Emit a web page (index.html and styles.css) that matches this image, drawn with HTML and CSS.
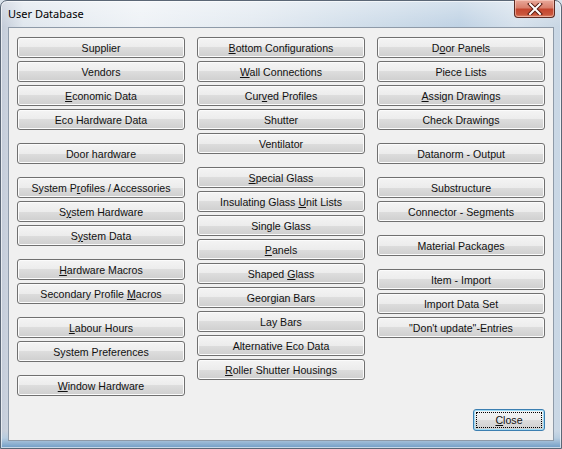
FILE: index.html
```html
<!DOCTYPE html>
<html>
<head>
<meta charset="utf-8">
<link rel="stylesheet" href="styles.css">
</head>
<body>
<div class="window">
  <div class="titlebar">
    <span class="title">User Database</span>
    <button class="closebox" aria-label="Close">
      <svg width="16" height="12" viewBox="0 0 16 12"><path d="M3 1 L13 11 M13 1 L3 11" stroke="#5a1e14" stroke-width="4" stroke-linecap="square"/><path d="M3 1 L13 11 M13 1 L3 11" stroke="#ffffff" stroke-width="2" stroke-linecap="square"/></svg>
    </button>
  </div>
  <div class="client">
    <div class="columns">
      <div class="col">
        <div class="btn">Supplier</div>
        <div class="btn">Vendors</div>
        <div class="btn"><u>E</u>conomic Data</div>
        <div class="btn">Eco Hardware Data</div>
        <div class="btn group">Door hardware</div>
        <div class="btn group">System P<u>r</u>ofiles / Accessories</div>
        <div class="btn">S<u>y</u>stem Hardware</div>
        <div class="btn">S<u>y</u>stem Data</div>
        <div class="btn group"><u>H</u>ardware Macros</div>
        <div class="btn">Secondary Profile <u>M</u>acros</div>
        <div class="btn group"><u>L</u>abour Hours</div>
        <div class="btn">System Preferences</div>
        <div class="btn group"><u>W</u>indow Hardware</div>
      </div>
      <div class="col">
        <div class="btn"><u>B</u>ottom Configurations</div>
        <div class="btn"><u>W</u>all Connections</div>
        <div class="btn">Cur<u>v</u>ed Profiles</div>
        <div class="btn">Shutter</div>
        <div class="btn">Ventilator</div>
        <div class="btn group"><u>S</u>pecial Glass</div>
        <div class="btn">Insulating Glass <u>U</u>nit Lists</div>
        <div class="btn">Single Glass</div>
        <div class="btn"><u>P</u>anels</div>
        <div class="btn">Shaped <u>G</u>lass</div>
        <div class="btn">Georgian Bars</div>
        <div class="btn">Lay Bars</div>
        <div class="btn">Alternative Eco Data</div>
        <div class="btn"><u>R</u>oller Shutter Housings</div>
      </div>
      <div class="col">
        <div class="btn">D<u>o</u>or Panels</div>
        <div class="btn">Piece Lists</div>
        <div class="btn"><u>A</u>ssign Drawings</div>
        <div class="btn">Check Drawings</div>
        <div class="btn group">Datanorm - Output</div>
        <div class="btn group">Substructure</div>
        <div class="btn">Connector - Segments</div>
        <div class="btn group">Material Packages</div>
        <div class="btn group">Item - Import</div>
        <div class="btn">Import Data Set</div>
        <div class="btn">"Don't update"-Entries</div>
      </div>
    </div>
    <div class="footer">
      <div class="btn default"><span class="focus"><u>C</u>lose</span></div>
    </div>
  </div>
</div>
</body>
</html>
```

FILE: styles.css
```css
html, body {
  margin: 0;
  padding: 0;
  width: 562px;
  height: 449px;
  overflow: hidden;
  background: #d9e2ea;
}

.window {
  box-sizing: border-box;
  width: 562px;
  height: 449px;
  display: flex;
  flex-direction: column;
  border: 1px solid #5b6776;
  border-radius: 7px 7px 0 0;
  padding: 0 7px 7px 7px;
  background:
    linear-gradient(to bottom, rgba(255,255,255,0) 0, rgba(255,255,255,0) 430px, #b8cde0 437px, #6f9cc6 447px),
    linear-gradient(to bottom, rgba(255,255,255,0.35) 0, rgba(255,255,255,0) 26px),
    linear-gradient(to right, #c3cbd8 0, #e0e7ee 4%, #eef2f6 25%, #e3eaf1 45%, #cbdae8 70%, #bfd2e4 82%, #d6e1ec 92%, #c8d6e4 100%);
  box-shadow: inset 0 0 0 1px rgba(255,255,255,0.6);
}

.titlebar {
  height: 26px;
  display: flex;
  align-items: flex-start;
  justify-content: space-between;
  flex: none;
}

.title {
  font-family: "Noto Sans", "DejaVu Sans", sans-serif;
  font-size: 11px;
  color: #000;
  padding-top: 5px;
  line-height: 16px;
}

.closebox {
  width: 41px;
  height: 18px;
  margin-top: -1px;
  margin-right: -1px;
  padding: 0;
  border: 1px solid #5c2a22;
  border-top: none;
  border-radius: 0 0 4px 4px;
  background: linear-gradient(to bottom, #e9a99a 0, #d9806d 45%, #c4462f 55%, #c9563c 85%, #e08a70 100%);
  box-shadow: inset 0 0 0 1px rgba(255,220,210,0.5);
  display: flex;
  align-items: center;
  justify-content: center;
}

.client {
  flex: 1;
  background: #f0f0f0;
  border: 1px solid #8e9aa8;
  display: flex;
  flex-direction: column;
  padding: 9px 8px 9px 8px;
}

.columns {
  display: grid;
  grid-template-columns: 168px 168px 168px;
  column-gap: 12px;
}

.col {
  display: flex;
  flex-direction: column;
  gap: 3px;
}

.btn {
  box-sizing: border-box;
  height: 21px;
  border: 1px solid #707070;
  border-radius: 3px;
  background: linear-gradient(to bottom, #f4f4f4 0, #ececec 50%, #dddddd 50%, #cfcfcf 100%);
  box-shadow: inset 0 0 0 1px #fbfbfb;
  font-family: "Liberation Sans", Arial, sans-serif;
  font-size: 10.6px;
  line-height: 20px;
  text-align: center;
  color: #111;
  white-space: nowrap;
}

.btn.group {
  margin-top: 10px;
}

.footer {
  margin-top: auto;
  display: flex;
  justify-content: flex-end;
}

.btn.default {
  width: 72px;
  height: 22px;
  border-color: #3c7fb1;
  box-shadow: inset 0 0 0 1px #9fdcf6;
  padding: 2px;
  line-height: 16px;
}

.focus {
  display: block;
  height: 16px;
  border: 1px dotted #000;
  box-sizing: border-box;
  line-height: 14px;
}
```
